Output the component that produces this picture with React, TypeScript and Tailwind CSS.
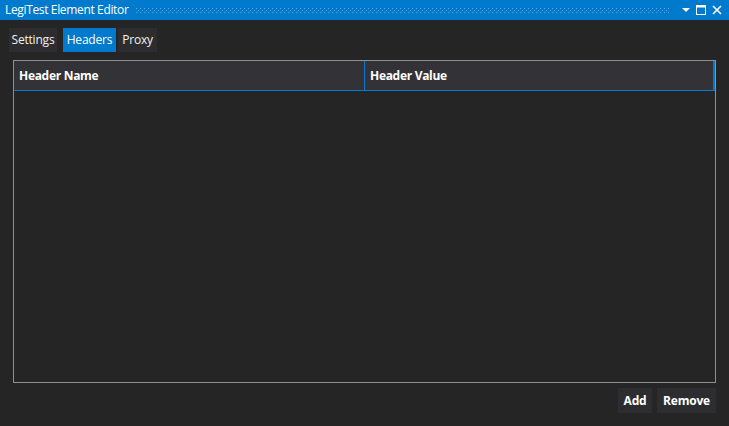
import React from "react";

export default function App() {
  return (
    <div className="w-[729px] h-[426px] bg-[#252526] flex flex-col text-white overflow-hidden font-['Segoe_UI','Open_Sans','Noto_Sans',sans-serif]">
      {/* Title bar */}
      <div className="h-[20px] bg-[#007acc] flex items-center pl-[5px] pr-[7px] shrink-0">
        <span className="text-[12px] leading-none tracking-[-0.35px] whitespace-nowrap">LegiTest Element Editor</span>
        <div className="ml-[8px] flex-1 h-[5px] mr-[12px] bg-[image:radial-gradient(circle_at_0.5px_0.5px,rgba(140,195,240,0.7)_0.7px,transparent_0.8px),radial-gradient(circle_at_2.5px_2.5px,rgba(140,195,240,0.7)_0.7px,transparent_0.8px)] bg-[size:4px_4px]" />
        <svg width="8" height="5" viewBox="0 0 8 5" className="mr-[6px]">
          <polygon points="0,0 8,0 4,4" fill="#ffffff" />
        </svg>
        <svg width="10" height="10" viewBox="0 0 10 10" className="mr-[6px]">
          <rect x="0.5" y="0.5" width="9" height="9" fill="none" stroke="#fff" strokeWidth="1" />
          <rect x="0" y="0" width="10" height="2.5" fill="#fff" />
        </svg>
        <svg width="10" height="10" viewBox="0 0 10 10">
          <path d="M1 1 L9 9 M9 1 L1 9" stroke="#fff" strokeWidth="1.6" />
        </svg>
      </div>

      {/* Tabs */}
      <div className="flex mt-[8px] ml-[9px] h-[24px] text-[12px] tracking-[-0.2px]">
        <div className="w-[48px] bg-[#2d2d30] flex items-center justify-center text-[#f1f1f1]">Settings</div>
        <div className="w-[53px] ml-[6px] bg-[#007acc] flex items-center justify-center">Headers</div>
        <div className="w-[39px] ml-[2px] bg-[#2d2d30] flex items-center justify-center text-[#f1f1f1]">Proxy</div>
      </div>

      {/* Table */}
      <div className="mt-[8px] ml-[13px] w-[703px] h-[323px] border border-[#8f8f8f] flex flex-col">
        <div className="h-[30px] flex bg-[#333337] border-b border-[#007acc] text-[12px] font-bold tracking-[-0.3px]">
          <div className="w-[351px] border-r border-[#007acc] flex items-center pl-[5px]">Header Name</div>
          <div className="flex-1 border-r-2 border-[#007acc] flex items-center pl-[5px]">Header Value</div>
        </div>
        <div className="flex-1" />
      </div>

      {/* Buttons */}
      <div className="flex justify-end mt-[5px] mr-[13px] gap-[5px] text-[12px] font-bold tracking-[-0.2px]">
        <div className="w-[34px] h-[25px] bg-[#2d2d30] flex items-center justify-center">Add</div>
        <div className="w-[59px] h-[25px] bg-[#2d2d30] flex items-center justify-center">Remove</div>
      </div>
    </div>
  );
}
